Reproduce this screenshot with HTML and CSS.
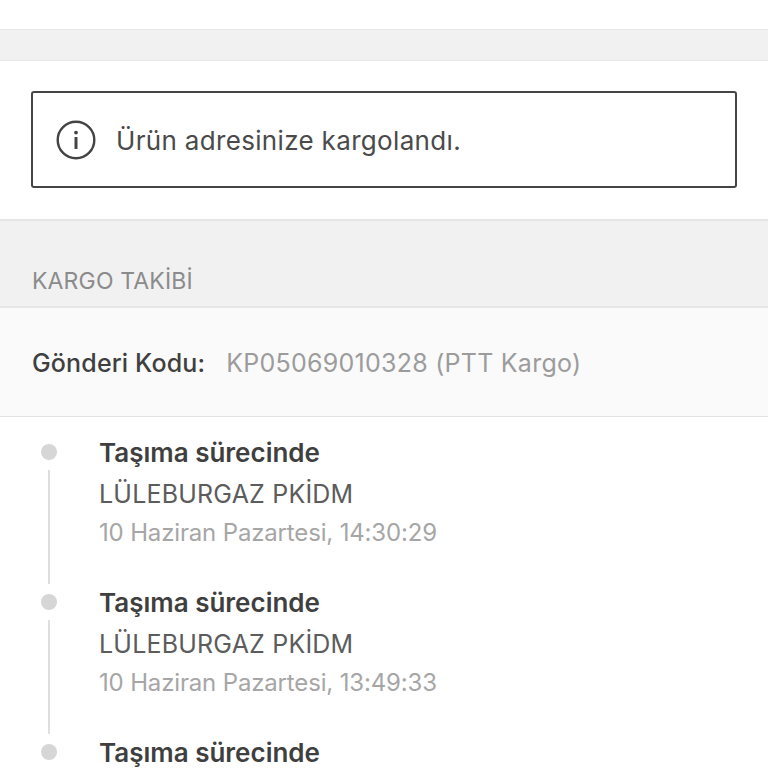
FILE: index.html
```html
<!DOCTYPE html>
<html lang="tr">
<head>
    <meta charset="UTF-8">
    <meta name="viewport" content="width=device-width, initial-scale=1.0">
    <title>Kargo Takibi</title>
    <link rel="stylesheet" href="styles.css">
</head>
<body>
    <div class="top-blank"></div>
    <div class="spacer"></div>

    <!-- Status message -->
    <section class="status-section">
        <div class="status-box">
            <svg class="info-icon" width="40" height="40" viewBox="0 0 40 40" fill="none">
                <circle cx="20" cy="20" r="18.3" stroke="#444" stroke-width="2.4"/>
                <circle cx="20" cy="12.6" r="1.9" fill="#444"/>
                <rect x="18.5" y="17" width="3" height="12" rx="0.6" fill="#444"/>
            </svg>
            <p class="status-text">Ürün adresinize kargolandı.</p>
        </div>
    </section>

    <h2 class="section-title">KARGO TAKİBİ</h2>

    <div class="shipment-code">
        <span class="code-label">Gönderi Kodu:</span>
        <span class="code-value">KP05069010328 (PTT Kargo)</span>
    </div>

    <!-- Tracking events -->
    <ul class="timeline">
        <li class="event">
            <div class="marker"><span class="dot"></span><span class="line"></span></div>
            <div class="event-body">
                <p class="event-title">Taşıma sürecinde</p>
                <p class="event-place">LÜLEBURGAZ PKİDM</p>
                <p class="event-date">10 Haziran Pazartesi, 14:30:29</p>
            </div>
        </li>
        <li class="event">
            <div class="marker"><span class="dot"></span><span class="line"></span></div>
            <div class="event-body">
                <p class="event-title">Taşıma sürecinde</p>
                <p class="event-place">LÜLEBURGAZ PKİDM</p>
                <p class="event-date">10 Haziran Pazartesi, 13:49:33</p>
            </div>
        </li>
        <li class="event event-last">
            <div class="marker"><span class="dot"></span></div>
            <div class="event-body">
                <p class="event-title">Taşıma sürecinde</p>
            </div>
        </li>
    </ul>
</body>
</html>
```

FILE: styles.css
```css
html, body {
    height: 768px;
    overflow: hidden;
}

body {
    margin: 0;
    background-color: #fff;
    font-family: Inter, "Liberation Sans", sans-serif;
    color: #3f3f3f;
}

p, h2, ul {
    margin: 0;
    padding: 0;
}

.top-blank {
    height: 29px;
}

.spacer {
    height: 30px;
    background-color: #f1f1f1;
    border-top: 1px solid #e6e6e6;
    border-bottom: 1px solid #e6e6e6;
}

.status-section {
    padding: 30px 31px 31px;
    border-bottom: 2px solid #e6e6e6;
}

.status-box {
    display: flex;
    align-items: center;
    gap: 20px;
    height: 97px;
    box-sizing: border-box;
    padding: 0 0 0 23px;
    border: 2px solid #454545;
    border-radius: 3px;
}

.info-icon {
    flex-shrink: 0;
}

.status-text {
    padding-top: 2px;
    font-size: 26px;
    letter-spacing: 0.33px;
    color: #4a4a4a;
}

.section-title {
    height: 85px;
    box-sizing: border-box;
    padding: 47px 32px 0;
    background-color: #f1f1f1;
    font-size: 23px;
    line-height: 26px;
    letter-spacing: 0.15px;
    font-weight: 400;
    color: #8b8b8b;
}

.shipment-code {
    display: flex;
    align-items: center;
    gap: 21px;
    height: 111px;
    box-sizing: border-box;
    padding: 1px 32px 0;
    background-color: #fafafa;
    border-top: 2px solid #e6e6e6;
    border-bottom: 1px solid #e2e2e2;
    font-size: 25px;
}

.code-label {
    font-weight: 500;
    letter-spacing: 0.15px;
    color: #3f3f3f;
}

.code-value {
    letter-spacing: 0.25px;
    color: #9c9c9c;
}

.timeline {
    list-style: none;
    padding: 18px 0 0 41px;
}

.event {
    display: flex;
    height: 150px;
}

.event-last {
    height: 33px;
}

.marker {
    display: flex;
    flex-direction: column;
    align-items: center;
    width: 16px;
    margin-right: 42px;
    padding-top: 9px;
}

.dot {
    width: 16px;
    height: 16px;
    border-radius: 50%;
    background-color: #d6d6d6;
}

.line {
    width: 2px;
    height: 114px;
    margin-top: 10px;
    background-color: #dfdfdf;
}

.event-title {
    padding-top: 2px;
    font-size: 26px;
    line-height: 31px;
    font-weight: 600;
    color: #3f3f3f;
}

.event-place {
    margin-top: 8px;
    font-size: 25px;
    line-height: 36px;
    letter-spacing: 0.2px;
    color: #5c5c5c;
}

.event-date {
    margin-top: 3px;
    font-size: 24px;
    line-height: 36px;
    letter-spacing: -0.16px;
    color: #a6a6a6;
}
```
